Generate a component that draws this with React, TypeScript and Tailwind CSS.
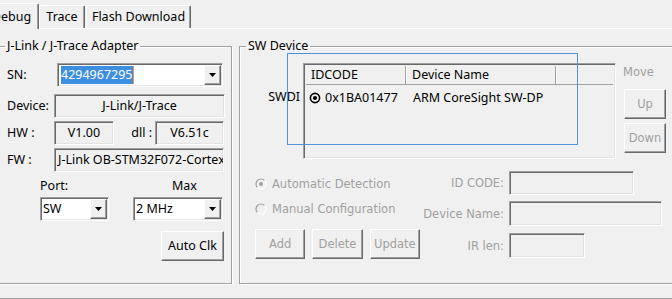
import { type FC, type ReactNode } from "react";

const raised =
    "border border-t-white border-l-white border-r-[#696969] border-b-[#696969] shadow-[inset_-1px_-1px_0_#a0a0a0]";
const sunken =
    "border border-t-[#a0a0a0] border-l-[#a0a0a0] border-r-white border-b-white shadow-[inset_1px_1px_0_#696969,inset_-1px_-1px_0_#e3e3e3]";
const groupBox =
    "border border-[#a0a0a0] shadow-[1px_1px_0_white,inset_1px_1px_0_white] h-[246px] shrink-0";
const dim = "text-[#a0a0a0] font-['DejaVu_Sans',sans-serif] text-[11.5px]";

const Arrow: FC = () => (
    <div className={`${raised} w-[17px] h-[20px] flex items-center justify-center bg-[#f0f0f0]`}>
        <svg width="7" height="4" viewBox="0 0 7 4">
            <path d="M0 0h7L3.5 4z" fill="black" />
        </svg>
    </div>
);

const Combo: FC<{ className?: string; children?: ReactNode }> = ({ className, children }) => (
    <div className={`${sunken} bg-white h-[24px] flex items-center pl-[2px] pr-[1px] ${className ?? ""}`}>
        <div className="flex-1 flex items-center overflow-hidden whitespace-nowrap">{children}</div>
        <Arrow />
    </div>
);

const Field: FC<{ className?: string; children?: ReactNode }> = ({ className, children }) => (
    <div
        className={`${sunken} h-[24px] flex items-center overflow-hidden whitespace-nowrap ${className ?? ""}`}
    >
        {children}
    </div>
);

const Btn: FC<{ className?: string; children?: ReactNode }> = ({ className, children }) => (
    <div className={`${raised} flex items-center justify-center ${className ?? ""}`}>{children}</div>
);

const Radio: FC<{ checked?: boolean }> = ({ checked }) => (
    <svg width="12" height="12" viewBox="0 0 12 12" className="shrink-0">
        <path d="M2.46 9.54A5 5 0 0 1 9.54 2.46" stroke="#a0a0a0" strokeWidth="1.2" fill="none" />
        <path d="M9.54 2.46A5 5 0 0 1 2.46 9.54" stroke="#ffffff" strokeWidth="1.2" fill="none" />
        {checked && <circle cx="6" cy="6" r="2" fill="#a0a0a0" />}
    </svg>
);

const Tab: FC<{ className?: string; children?: ReactNode }> = ({ className, children }) => (
    <div
        className={`border-t border-l border-t-white border-l-white border-r border-r-[#696969] shadow-[inset_-1px_0_0_#a0a0a0] rounded-t-[2px] flex items-center justify-center bg-[#f0f0f0] whitespace-nowrap ${className ?? ""}`}
    >
        {children}
    </div>
);

const App: FC = () => {
    return (
        <div className="w-[672px] h-[299px] overflow-hidden bg-[#f0f0f0] flex flex-col text-[12.5px] text-black font-['Noto_Sans',sans-serif] leading-[16px]">
            {/* tabs */}
            <div className="h-[29px] shrink-0 flex items-end border-b border-white">
                <Tab className="ml-[-16px] w-[55px] h-[26px] -mb-px relative z-10">Debug</Tab>
                <Tab className="w-[46px] h-[23px]">Trace</Tab>
                <Tab className="ml-[1px] w-[105px] h-[23px]">Flash Download</Tab>
            </div>

            {/* panel */}
            <div className="flex-1 border-b border-[#a0a0a0] pt-[9px] flex gap-[7px]">
                {/* J-Link group */}
                <fieldset className={`${groupBox} ml-[-2px] w-[234px]`}>
                    <legend className="ml-[6px] px-[2px] leading-[16px]">J-Link / J-Trace Adapter</legend>
                    <div className="flex flex-col pl-[8px]">
                        <div className="mt-[9px] flex items-center">
                            <span className="w-[50px]">SN:</span>
                            <Combo className="w-[166px]">
                                <span className="bg-[#3d8ee0] text-white leading-[18px] ml-[1px]">4294967295</span>
                                <span className="w-[1px] h-[18px] bg-[#e8953a]" />
                            </Combo>
                        </div>
                        <div className="mt-[7px] flex items-center">
                            <span className="w-[47px]">Device:</span>
                            <Field className="w-[171px] justify-center">J-Link/J-Trace</Field>
                        </div>
                        <div className="mt-[3px] flex items-center">
                            <span className="w-[47px]">HW :</span>
                            <Field className="w-[60px] justify-center">V1.00</Field>
                            <span className="w-[41px] text-right pr-[3px]">dll :</span>
                            <Field className="w-[69px] justify-center">V6.51c</Field>
                        </div>
                        <div className="mt-[3px] flex items-center">
                            <span className="w-[47px]">FW :</span>
                            <Field className="w-[170px] pl-[3px]">J-Link OB-STM32F072-Cortex-M</Field>
                        </div>
                        <div className="mt-[6px] h-[16px] flex">
                            <span className="ml-[33px] w-[132px]">Port:</span>
                            <span>Max</span>
                        </div>
                        <div className="mt-[3px] flex">
                            <Combo className="ml-[33px] w-[69px]">SW</Combo>
                            <Combo className="ml-[24px] w-[90px]">2 MHz</Combo>
                        </div>
                        <Btn className="mt-[10px] ml-[154px] w-[63px] h-[30px]">Auto Clk</Btn>
                    </div>
                </fieldset>

                {/* SW Device group */}
                <fieldset className={`${groupBox} w-[460px]`}>
                    <legend className="ml-[6px] px-[2px] leading-[16px]">SW Device</legend>
                    <div className="relative mt-[9px] h-[96px] flex items-start">
                        <span className="w-[63px] pt-[26px] text-right pr-[3px]">SWDI</span>
                        <div className={`${sunken} w-[313px] h-[96px] flex flex-col p-[2px]`}>
                            <div className="h-[19px] flex border-b border-[#a0a0a0]">
                                <div className="w-[100px] pl-[5px] flex items-center border-r border-[#a0a0a0] shadow-[1px_0_0_white]">
                                    IDCODE
                                </div>
                                <div className="w-[150px] pl-[6px] flex items-center border-r border-[#a0a0a0] shadow-[1px_0_0_white]">
                                    Device Name
                                </div>
                                <div className="flex-1" />
                            </div>
                            <div className="mt-[4px] h-[18px] flex items-center">
                                <div className="w-[101px] flex items-center pl-[3px]">
                                    <svg width="12" height="12" viewBox="0 0 12 12" className="shrink-0">
                                        <circle cx="6" cy="6" r="4.6" stroke="black" strokeWidth="1.6" fill="none" />
                                        <circle cx="6" cy="6" r="2.1" fill="black" />
                                    </svg>
                                    <span className="ml-[4px]">0x1BA01477</span>
                                </div>
                                <span className="pl-[6px]">ARM CoreSight SW-DP</span>
                            </div>
                        </div>
                        <div className="ml-[7px] w-[43px] flex flex-col">
                            <span className={`${dim} mt-[1px] leading-[16px]`}>Move</span>
                            <Btn className={`${dim} mt-[9px] ml-[1px] w-[42px] h-[30px]`}>Up</Btn>
                            <Btn className={`${dim} mt-[4px] ml-[1px] w-[42px] h-[30px]`}>Down</Btn>
                        </div>
                        <div className="absolute left-[47px] top-[-10px] w-[291px] h-[92px] border border-[#4f94dc]" />
                    </div>

                    <div className={`${dim} mt-[11px] flex`}>
                        <div className="w-[180px] shrink-0 pl-[15px] flex flex-col">
                            <div className="mt-[2px] h-[24px] flex items-center gap-[5px]">
                                <Radio checked />
                                <span>Automatic Detection</span>
                            </div>
                            <div className="h-[25px] flex items-center gap-[5px]">
                                <Radio />
                                <span>Manual Configuration</span>
                            </div>
                            <div className="mt-[8px] flex gap-[7px]">
                                <Btn className="w-[56px] h-[30px]">Add</Btn>
                                <Btn className="w-[56px] h-[30px]">Delete</Btn>
                                <Btn className="w-[56px] h-[30px]">Update</Btn>
                            </div>
                        </div>
                        <div className="grid grid-cols-[84px_auto] gap-x-[5px] gap-y-[5px] items-center">
                            <span className="text-right">ID CODE:</span>
                            <Field className="w-[125px]" />
                            <span className="text-right">Device Name:</span>
                            <Field className="w-[153px] h-[25px]" />
                            <span className="text-right">IR len:</span>
                            <Field className="w-[76px] h-[25px]" />
                        </div>
                    </div>
                </fieldset>
            </div>
        </div>
    );
};

export default App;
